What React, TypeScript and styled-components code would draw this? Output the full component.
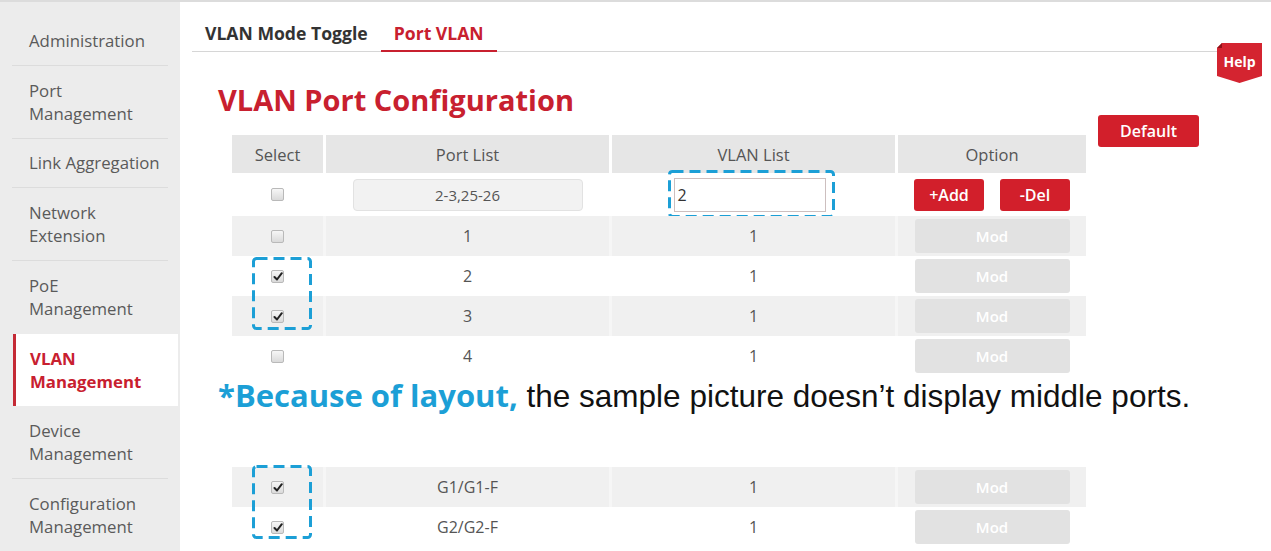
import React from "react";
import styled, { createGlobalStyle } from "styled-components";

const GlobalStyle = createGlobalStyle`
  html, body { margin: 0; padding: 0; background: #ffffff; }
  body { font-family: "Open Sans", "Liberation Sans", sans-serif; color: #555; }
  * { box-sizing: border-box; }
`;

const RED = "#d21f2b";
const BLUE = "#1c9fd6";

const Page = styled.div`
  display: flex;
  width: 1271px;
  height: 551px;
  overflow: hidden;
  border-top: 2px solid #dcdcdc;
  background: #fff;
`;

/* ---------- sidebar ---------- */

const Sidebar = styled.nav`
  width: 180px;
  flex-shrink: 0;
  background: #ececec;
  padding: 14px 2px 0 12px;
  display: flex;
  flex-direction: column;
`;

const NavItem = styled.div<{ $active?: boolean }>`
  padding: 13px 6px 13px ${(p) => (p.$active ? "14px" : "17px")};
  font-size: 16.8px;
  line-height: 23px;
  white-space: nowrap;
  color: ${(p) => (p.$active ? "#c8202f" : "#5a5a5a")};
  font-weight: ${(p) => (p.$active ? 700 : 400)};
  background: ${(p) => (p.$active ? "#fff" : "transparent")};
  border-left: ${(p) => (p.$active ? "3px solid #c42a35" : "none")};
  margin-left: ${(p) => (p.$active ? "1px" : "0")};
`;

const NavDivider = styled.div<{ $hidden?: boolean }>`
  height: 1px;
  margin-right: 10px;
  background: ${(p) => (p.$hidden ? "transparent" : "#dcdcdc")};
`;

/* ---------- main panel ---------- */

const Main = styled.main`
  position: relative;
  flex: 1;
  padding-left: 12px;
  display: flex;
  flex-direction: column;
`;

const TabBar = styled.div`
  display: flex;
  align-items: flex-end;
  height: 50px;
  margin-right: 54px;
  border-bottom: 1px solid #d6d6d6;
`;

const Tab = styled.div<{ $active?: boolean }>`
  padding: 0 13px 5px;
  margin-bottom: -1px;
  font-size: 17.6px;
  line-height: 24px;
  font-weight: 700;
  color: ${(p) => (p.$active ? "#c8202f" : "#333")};
  border-bottom: 2px solid ${(p) => (p.$active ? "#c8202f" : "transparent")};
`;

const HelpBadge = styled.div`
  position: absolute;
  top: 41px;
  right: 9px;
  width: 45px;
  height: 41px;
  display: flex;
  justify-content: center;
  padding-top: 9px;
  color: #fff;
  font-weight: 700;
  font-size: 14px;
  line-height: 20px;

  svg {
    position: absolute;
    inset: 0;
  }
  span {
    position: relative;
  }
`;

const Title = styled.h1`
  margin: 31px 0 0 26px;
  font-size: 29px;
  line-height: 34px;
  font-weight: 700;
  color: #c8202f;
`;

const Body = styled.div`
  display: flex;
  align-items: flex-start;
  gap: 12px;
  margin: 18px 0 0 40px;
`;

const Table = styled.div`
  width: 854px;
  display: flex;
  flex-direction: column;
`;

const GRID = "91px 283px 283px 188px";

const HeaderRow = styled.div`
  display: grid;
  grid-template-columns: ${GRID};
  column-gap: 3px;
  height: 38px;
`;

const HeaderCell = styled.div`
  background: #e6e6e6;
  display: flex;
  align-items: center;
  justify-content: center;
  font-size: 16.5px;
  color: #555;
`;

const Row = styled.div<{ $shaded?: boolean; $tall?: boolean }>`
  display: grid;
  grid-template-columns: ${GRID};
  column-gap: 3px;
  height: ${(p) => (p.$tall ? "43px" : "40px")};
  background: ${(p) => (p.$shaded ? "#f6f6f6" : "#fff")};
`;

const Cell = styled.div<{ $shaded?: boolean }>`
  position: relative;
  display: flex;
  align-items: center;
  justify-content: center;
  gap: 16px;
  font-size: 16px;
  color: #555;
  background: ${(p) => (p.$shaded ? "#f0f0f0" : "#fff")};
`;

const RowGroup = styled.div`
  position: relative;
  display: flex;
  flex-direction: column;
`;

const Box = styled.span`
  width: 13px;
  height: 13px;
  border: 1px solid #b9b9b9;
  border-radius: 2px;
  background: linear-gradient(#f6f6f6, #dadada);
  display: flex;
  align-items: center;
  justify-content: center;
`;

const ReadonlyField = styled.div`
  width: 230px;
  height: 32px;
  border: 1px solid #e2e2e2;
  border-radius: 4px;
  background: #f2f2f2;
  display: flex;
  align-items: center;
  justify-content: center;
  font-size: 15px;
  color: #555;
`;

const TextField = styled.div`
  width: 152px;
  height: 34px;
  margin-right: 8px;
  border: 1px solid #cdbfbf;
  background: #fff;
  display: flex;
  align-items: center;
  padding-left: 3px;
  font-size: 16px;
  color: #333;
`;

const ActionButton = styled.button`
  width: 70px;
  height: 32px;
  border: none;
  border-radius: 3px;
  background: ${RED};
  color: #fff;
  font-family: inherit;
  font-size: 16px;
  font-weight: 600;
  padding: 0;
`;

const ModButton = styled.button`
  width: 155px;
  height: 34px;
  border: none;
  border-radius: 3px;
  background: #e2e2e2;
  color: #fff;
  font-family: inherit;
  font-size: 15px;
  font-weight: 600;
  padding: 0;
`;

const DefaultButton = styled.button`
  width: 101px;
  height: 32px;
  margin-top: -20px;
  border: none;
  border-radius: 3px;
  background: ${RED};
  color: #fff;
  font-family: inherit;
  font-size: 16px;
  font-weight: 600;
  padding: 0;
`;

const Note = styled.p`
  margin: 1px 0 53px -14px;
  white-space: nowrap;
  font-family: "Liberation Sans", Arial, sans-serif;
  font-size: 31.5px;
  line-height: 36px;
  color: #111;
`;

const NoteLead = styled.span`
  font-family: "Open Sans", "Liberation Sans", sans-serif;
  font-size: 31px;
  font-weight: 700;
  color: ${BLUE};
`;

const FrameSvg = styled.svg<{ $x: number; $y: number }>`
  position: absolute;
  left: ${(p) => p.$x}px;
  top: ${(p) => p.$y}px;
  overflow: visible;
  pointer-events: none;
`;

/* ---------- small parts ---------- */

function DashedFrame({ x, y, w, h }: { x: number; y: number; w: number; h: number }) {
  return (
    <FrameSvg $x={x} $y={y} width={w} height={h}>
      <rect
        x={1.5}
        y={1.5}
        width={w - 3}
        height={h - 3}
        rx={3}
        fill="none"
        stroke={BLUE}
        strokeWidth={3}
        strokeDasharray="11 6"
      />
    </FrameSvg>
  );
}

function Checkbox({ checked }: { checked?: boolean }) {
  return (
    <Box>
      {checked && (
        <svg width="10" height="9" viewBox="0 0 10 9">
          <path d="M1.5 5 L4 7.5 L8.8 1.2" fill="none" stroke="#222" strokeWidth="2" strokeLinecap="round" strokeLinejoin="round" />
        </svg>
      )}
    </Box>
  );
}

function PortRow({ port, vlan, checked, shaded }: { port: string; vlan: string; checked?: boolean; shaded?: boolean }) {
  return (
    <Row $shaded={shaded}>
      <Cell $shaded={shaded}>
        <Checkbox checked={checked} />
      </Cell>
      <Cell $shaded={shaded}>{port}</Cell>
      <Cell $shaded={shaded}>{vlan}</Cell>
      <Cell $shaded={shaded}>
        <ModButton>Mod</ModButton>
      </Cell>
    </Row>
  );
}

const navItems: { label: string[]; active?: boolean }[] = [
  { label: ["Administration"] },
  { label: ["Port", "Management"] },
  { label: ["Link Aggregation"] },
  { label: ["Network", "Extension"] },
  { label: ["PoE", "Management"] },
  { label: ["VLAN", "Management"], active: true },
  { label: ["Device", "Management"] },
  { label: ["Configuration", "Management"] },
];

export default function App() {
  return (
    <>
      <GlobalStyle />
      <Page>
        <Sidebar>
          {navItems.map((item, i) => {
            const next = navItems[i + 1];
            return (
              <React.Fragment key={item.label.join(" ")}>
                <NavItem $active={item.active}>
                  {item.label.map((l, j) => (
                    <div key={j}>{l}</div>
                  ))}
                </NavItem>
                {next && <NavDivider $hidden={item.active || next.active} />}
              </React.Fragment>
            );
          })}
        </Sidebar>

        <Main>
          <TabBar>
            <Tab>VLAN Mode Toggle</Tab>
            <Tab $active>Port VLAN</Tab>
          </TabBar>

          <HelpBadge>
            <svg width="45" height="41" viewBox="0 0 45 41">
              <path d="M5 0 H45 V33 L22.5 40 L0 33 V5 Z" fill="#d42430" />
              <path d="M0 5 L5 0 V5 Z" fill="#8e1219" />
            </svg>
            <span>Help</span>
          </HelpBadge>

          <Title>VLAN Port Configuration</Title>

          <Body>
            <Table>
              <HeaderRow>
                <HeaderCell>Select</HeaderCell>
                <HeaderCell>Port List</HeaderCell>
                <HeaderCell>VLAN List</HeaderCell>
                <HeaderCell>Option</HeaderCell>
              </HeaderRow>

              <Row $tall>
                <Cell>
                  <Checkbox />
                </Cell>
                <Cell>
                  <ReadonlyField>2-3,25-26</ReadonlyField>
                </Cell>
                <Cell>
                  <TextField>2</TextField>
                  <DashedFrame x={56} y={-3} w={167} h={48} />
                </Cell>
                <Cell>
                  <ActionButton>+Add</ActionButton>
                  <ActionButton>-Del</ActionButton>
                </Cell>
              </Row>

              <PortRow port="1" vlan="1" shaded />
              <RowGroup>
                <PortRow port="2" vlan="1" checked />
                <PortRow port="3" vlan="1" checked shaded />
                <DashedFrame x={20} y={1} w={60} h={73} />
              </RowGroup>
              <PortRow port="4" vlan="1" />

              <Note>
                <NoteLead>*Because of layout,</NoteLead> the sample picture doesn’t display middle ports.
              </Note>

              <RowGroup>
                <PortRow port="G1/G1-F" vlan="1" checked shaded />
                <PortRow port="G2/G2-F" vlan="1" checked />
                <DashedFrame x={20} y={-2} w={60} h={74} />
              </RowGroup>
            </Table>

            <DefaultButton>Default</DefaultButton>
          </Body>
        </Main>
      </Page>
    </>
  );
}
